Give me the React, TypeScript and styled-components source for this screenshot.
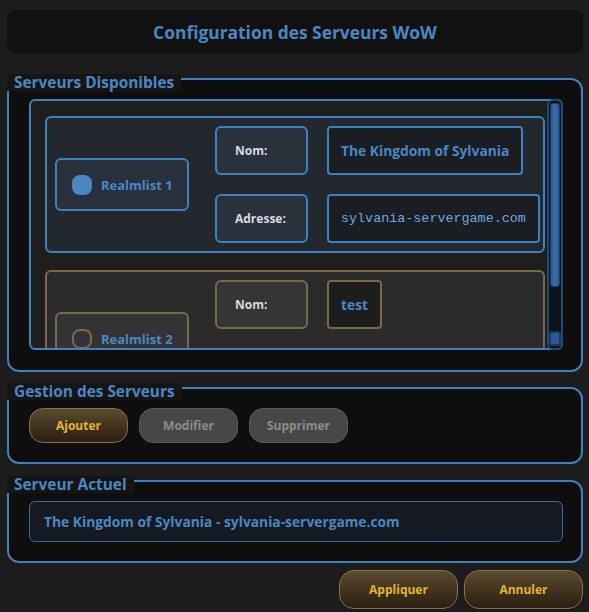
import React from "react";
import styled, { createGlobalStyle } from "styled-components";

type Server = {
  id: number;
  name: string;
  address: string;
  selected: boolean;
};

const servers: Server[] = [
  { id: 1, name: "The Kingdom of Sylvania", address: "sylvania-servergame.com", selected: true },
  { id: 2, name: "test", address: "", selected: false },
];

const BLUE = "#3f80bf";
const BLUE_TEXT = "#4a88c4";
const TAN = "#7a6848";

const Global = createGlobalStyle`
  body {
    margin: 0;
    background: #1c1c1c;
    font-family: "Open Sans", "Noto Sans", sans-serif;
  }
`;

const Page = styled.div`
  width: 576px;
  padding: 10px 6px 0 7px;
`;

const Header = styled.header`
  height: 43px;
  border-radius: 8px;
  background: #111111;
  display: flex;
  align-items: center;
  justify-content: center;
  color: ${BLUE_TEXT};
  font-size: 17.4px;
  font-weight: 700;
`;

const Group = styled.section<{ $mt: number; $pad: string }>`
  position: relative;
  margin-top: ${({ $mt }) => $mt}px;
  padding: ${({ $pad }) => $pad};
  border: 2px solid ${BLUE};
  border-radius: 12px;
  background: #0e0e0e;
`;

const GroupTitle = styled.div`
  position: absolute;
  left: -2px;
  top: -6px;
  height: 17px;
  padding: 0 7px;
  background: #151515;
  color: ${BLUE_TEXT};
  font-size: 15.4px;
  font-weight: 700;
  line-height: 17px;
`;

const ScrollArea = styled.div`
  height: 247px;
  display: flex;
  border: 2px solid ${BLUE};
  border-radius: 6px;
  background: #1e1e1e;
`;

const ScrollContent = styled.div`
  flex: 1;
  overflow: hidden;
  padding: 15px 1px 0 14px;
  display: flex;
  flex-direction: column;
  gap: 17px;
`;

const ScrollBar = styled.div`
  width: 12px;
  margin: -2px -2px -2px 0;
  border: 2px solid #1f4a78;
  border-radius: 6px;
  background: #0b141b;
  display: flex;
  flex-direction: column;
  align-items: center;
  justify-content: space-between;
  padding: 2px 0;
`;

const Handle = styled.div`
  width: 8px;
  height: 182px;
  border: 1px solid #1c3d64;
  border-radius: 3px;
  background: linear-gradient(90deg, #2a568a, #3a6ea8 50%, #2a568a);
`;

const LineButton = styled.div`
  width: 8px;
  height: 11px;
  border: 2px solid #1a3a5e;
  border-radius: 3px;
  background: #2c5a8e;
`;

const Item = styled.div<{ $active: boolean }>`
  flex-shrink: 0;
  width: 500px;
  box-sizing: border-box;
  display: flex;
  align-items: center;
  padding: 8px 4px 8px 8px;
  border: 2px solid ${({ $active }) => ($active ? BLUE : TAN)};
  border-radius: 6px;
  background: ${({ $active }) => ($active ? "#23272e" : "#2b2b2b")};
`;

const RadioBox = styled.div<{ $active: boolean }>`
  flex-shrink: 0;
  width: 134px;
  height: 53px;
  box-sizing: border-box;
  margin-right: 26px;
  display: flex;
  align-items: center;
  gap: 9px;
  padding-left: 15px;
  border: 2px solid ${({ $active }) => ($active ? BLUE : TAN)};
  border-radius: 6px;
  background: ${({ $active }) => ($active ? "#27303b" : "#333333")};
  color: ${BLUE_TEXT};
  font-size: 13px;
  font-weight: 700;
`;

const Indicator = styled.span<{ $active: boolean }>`
  width: 20px;
  height: 20px;
  box-sizing: border-box;
  border-radius: 8px;
  border: 2px solid ${({ $active }) => ($active ? BLUE_TEXT : TAN)};
  background: ${({ $active }) => ($active ? BLUE_TEXT : "transparent")};
`;

const Fields = styled.div`
  flex-shrink: 0;
  display: grid;
  grid-template-columns: 93px auto;
  column-gap: 19px;
  row-gap: 19px;
  justify-items: start;
`;

const FieldLabel = styled.div<{ $active: boolean }>`
  width: 93px;
  height: 49px;
  box-sizing: border-box;
  display: flex;
  align-items: center;
  padding-left: 18px;
  border: 2px solid ${({ $active }) => ($active ? BLUE : TAN)};
  border-radius: 6px;
  background: ${({ $active }) => ($active ? "#29313b" : "#353535")};
  color: #d6dce3;
  font-size: 12px;
  font-weight: 700;
`;

const FieldValue = styled.div<{ $active: boolean; $mono?: boolean }>`
  height: 49px;
  box-sizing: border-box;
  display: flex;
  align-items: center;
  padding: 0 12px;
  white-space: nowrap;
  border: 2px solid ${({ $active }) => ($active ? BLUE : TAN)};
  border-radius: 4px;
  background: ${({ $active }) => ($active ? "#1a1d22" : "#1d1d1d")};
  color: ${({ $mono }) => ($mono ? "#6fa8de" : BLUE_TEXT)};
  font-family: ${({ $mono }) =>
    $mono ? '"Liberation Mono", monospace' : '"Open Sans", sans-serif'};
  font-size: ${({ $mono }) => ($mono ? 13.4 : 13.8)}px;
  font-weight: ${({ $mono }) => ($mono ? 400 : 700)};
`;

const ButtonRow = styled.div`
  display: flex;
  gap: 11px;
`;

const Button = styled.button<{ $variant: "gold" | "off" }>`
  width: 99px;
  height: 35px;
  border-radius: 14px;
  font-family: "Open Sans", sans-serif;
  font-size: 12px;
  font-weight: 700;
  border: 1px solid ${({ $variant }) => ($variant === "gold" ? "#8a7048" : "#5a5a5a")};
  background: ${({ $variant }) =>
    $variant === "gold" ? "linear-gradient(#5a4a2e, #2c1e10)" : "#474747"};
  color: ${({ $variant }) => ($variant === "gold" ? "#e6b42e" : "#8c8c8c")};
`;

const Current = styled.div`
  height: 41px;
  box-sizing: border-box;
  display: flex;
  align-items: center;
  padding-left: 14px;
  border: 1px solid #3a6a9c;
  border-radius: 6px;
  background: #151a22;
  color: ${BLUE_TEXT};
  font-size: 13.8px;
  font-weight: 700;
`;

const Footer = styled.div`
  margin-top: 7px;
  display: flex;
  justify-content: flex-end;
  gap: 6px;
`;

const FooterButton = styled(Button)`
  width: 119px;
  height: 39px;
  border-radius: 15px;
`;

const ServerItem = ({ server }: { server: Server }) => (
  <Item $active={server.selected}>
    <RadioBox $active={server.selected}>
      <Indicator $active={server.selected} />
      Realmlist {server.id}
    </RadioBox>
    <Fields>
      <FieldLabel $active={server.selected}>Nom:</FieldLabel>
      <FieldValue $active={server.selected}>{server.name}</FieldValue>
      <FieldLabel $active={server.selected}>Adresse:</FieldLabel>
      <FieldValue $active={server.selected} $mono>
        {server.address}
      </FieldValue>
    </Fields>
  </Item>
);

export default function App() {
  const current = servers.find((s) => s.selected);
  return (
    <Page>
      <Global />
      <Header>Configuration des Serveurs WoW</Header>

      <Group $mt={25} $pad="19px 18px 20px 20px">
        <GroupTitle>Serveurs Disponibles</GroupTitle>
        <ScrollArea>
          <ScrollContent>
            {servers.map((s) => (
              <ServerItem key={s.id} server={s} />
            ))}
          </ScrollContent>
          <ScrollBar>
            <Handle />
            <LineButton />
          </ScrollBar>
        </ScrollArea>
      </Group>

      <Group $mt={15} $pad="19px 20px">
        <GroupTitle>Gestion des Serveurs</GroupTitle>
        <ButtonRow>
          <Button $variant="gold">Ajouter</Button>
          <Button $variant="off">Modifier</Button>
          <Button $variant="off">Supprimer</Button>
        </ButtonRow>
      </Group>

      <Group $mt={16} $pad="19px 18px 19px 20px">
        <GroupTitle>Serveur Actuel</GroupTitle>
        <Current>
          {current ? `${current.name} - ${current.address}` : ""}
        </Current>
      </Group>

      <Footer>
        <FooterButton $variant="gold">Appliquer</FooterButton>
        <FooterButton $variant="gold">Annuler</FooterButton>
      </Footer>
    </Page>
  );
}
